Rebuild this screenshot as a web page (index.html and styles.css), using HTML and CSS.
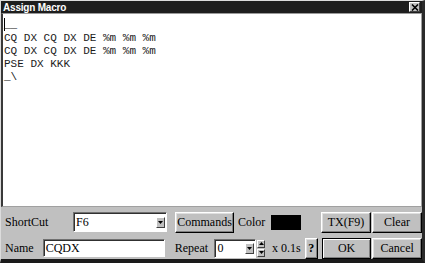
FILE: index.html
```html
<!DOCTYPE html>
<html lang="en">
<head>
    <meta charset="UTF-8">
    <title>Assign Macro</title>
    <link rel="stylesheet" href="styles.css">
</head>
<body>
  <div class="window">
    <div class="titlebar">
      <span class="title">Assign Macro</span>
      <span class="close">
        <svg width="8" height="7" viewBox="0 0 8 7"><path d="M1 0.5 L7 6.5 M7 0.5 L1 6.5" stroke="#000" stroke-width="1.6"/></svg>
      </span>
    </div>
    <div class="editor">
<pre class="macro"><span class="caret"></span>__
CQ DX CQ DX DE %m %m %m
CQ DX CQ DX DE %m %m %m
PSE DX KKK
_\</pre>
    </div>
    <div class="panel">
      <div class="row">
        <span class="label shortcut">ShortCut</span>
        <div class="field select wide">
          <span class="value">F6</span>
          <span class="arrow"><svg width="5" height="3" viewBox="0 0 5 3"><path d="M0 0 H5 L2.5 3 Z" fill="#000"/></svg></span>
        </div>
        <button class="btn commands">Commands</button>
        <span class="label color">Color</span>
        <span class="swatch"></span>
        <button class="btn big tx">TX(F9)</button>
        <button class="btn big">Clear</button>
      </div>
      <div class="row">
        <span class="label name">Name</span>
        <div class="field name-input"><span class="value">CQDX</span></div>
        <span class="label repeat">Repeat</span>
        <div class="field select small">
          <span class="value">0</span>
          <span class="arrow"><svg width="5" height="3" viewBox="0 0 5 3"><path d="M0 0 H5 L2.5 3 Z" fill="#000"/></svg></span>
        </div>
        <div class="spin">
          <span class="spin-btn"><svg width="5" height="3" viewBox="0 0 5 3"><path d="M0 3 H5 L2.5 0 Z" fill="#000"/></svg></span>
          <span class="spin-btn"><svg width="5" height="3" viewBox="0 0 5 3"><path d="M0 0 H5 L2.5 3 Z" fill="#000"/></svg></span>
        </div>
        <span class="label unit">x 0.1s</span>
        <button class="btn help">?</button>
        <button class="btn big ok">OK</button>
        <button class="btn big">Cancel</button>
      </div>
    </div>
  </div>
</body>
</html>
```

FILE: styles.css
```css
body {
  margin: 0;
  background: #c0c0c0;
  font-family: "Liberation Serif", "Times New Roman", serif;
}
.window {
  width: 425px;
  height: 263px;
  box-sizing: border-box;
  background: #c0c0c0;
  border-top: 1px solid #dcdcdc;
  border-left: 1px solid #dcdcdc;
  border-right: 3px solid #2a2a2a;
  border-bottom: 4px solid #1a1a1a;
  display: flex;
  flex-direction: column;
}
.titlebar {
  height: 12px;
  background: #1e1e1e;
  color: #fff;
  display: flex;
  align-items: center;
  justify-content: space-between;
  padding: 0 2px 0 2px;
}
.title {
  font: bold 10px "Liberation Sans", Arial, sans-serif;
  letter-spacing: -0.2px;
}
.close {
  width: 9px;
  height: 8px;
  background: #c0c0c0;
  border: 1px solid;
  border-color: #fff #404040 #404040 #fff;
  display: flex;
  align-items: center;
  justify-content: center;
}
.editor {
  height: 192px;
  background: #fff;
  border-top: 1px solid #9a9a9a;
  border-left: 2px solid #3a3a3a;
  border-right: 1px solid #a0a0a0;
  border-bottom: 1px solid #a0a0a0;
}
.macro {
  margin: 0;
  padding: 4px 0 0 1px;
  font: 11px/13px "Liberation Mono", "Courier New", monospace;
  color: #1a1a1a;
}
.caret {
  display: inline-block;
  width: 0;
  height: 13px;
  border-left: 1px solid #000;
  vertical-align: -3px;
  margin-right: -1px;
}
.panel {
  flex: 1;
  padding: 5px 0 0 4px;
  display: flex;
  flex-direction: column;
  gap: 6px;
}
.row {
  display: flex;
  align-items: center;
  height: 20px;
}
.label {
  font-size: 12px;
  color: #000;
}
.shortcut { width: 68px; }
.name { width: 38px; }
.repeat { width: 40px; margin-left: 10px; }
.color { margin-left: 4px; width: 33px; }
.unit { margin-left: 7px; width: 30px; }
.field {
  box-sizing: border-box;
  height: 19px;
  background: #fff;
  border: 1px solid;
  border-color: #707070 #fff #fff #707070;
  box-shadow: inset 1px 1px #303030;
  display: flex;
  align-items: center;
  font-size: 12px;
}
.field .value {
  flex: 1;
  padding-left: 2px;
}
.wide { width: 94px; height: 20px; }
.name-input { width: 123px; height: 18px; }
.small { width: 42px; }
.arrow {
  width: 9px;
  height: 11px;
  margin-right: 1px;
  background: #c0c0c0;
  border: 1px solid;
  border-color: #fff #404040 #404040 #fff;
  display: flex;
  align-items: center;
  justify-content: center;
  box-sizing: border-box;
}
.spin {
  display: flex;
  flex-direction: column;
  gap: 1px;
  margin-left: 1px;
}
.spin-btn {
  width: 8px;
  height: 8px;
  box-sizing: border-box;
  background: #c0c0c0;
  border: 1px solid;
  border-color: #fff #404040 #404040 #fff;
  display: flex;
  align-items: center;
  justify-content: center;
}
.swatch {
  width: 30px;
  height: 15px;
  background: #000;
}
.btn {
  box-sizing: border-box;
  height: 21px;
  padding: 0;
  background: #c0c0c0;
  font: 12px "Liberation Serif", "Times New Roman", serif;
  color: #000;
  border: 1px solid;
  border-color: #fff #000 #000 #fff;
  box-shadow: inset -1px -1px #808080, inset 1px 1px #dfdfdf;
}
.commands { width: 59px; margin-left: 8px; }
.big { width: 50px; margin-left: 1px; }
.tx { margin-left: 20px; }
.help { width: 13px; margin-left: 3px; font-weight: bold; }
.ok {
  margin-left: 4px;
  border-color: #000;
  box-shadow: inset 1px 1px #fff, inset -1px -1px #808080;
}
```
